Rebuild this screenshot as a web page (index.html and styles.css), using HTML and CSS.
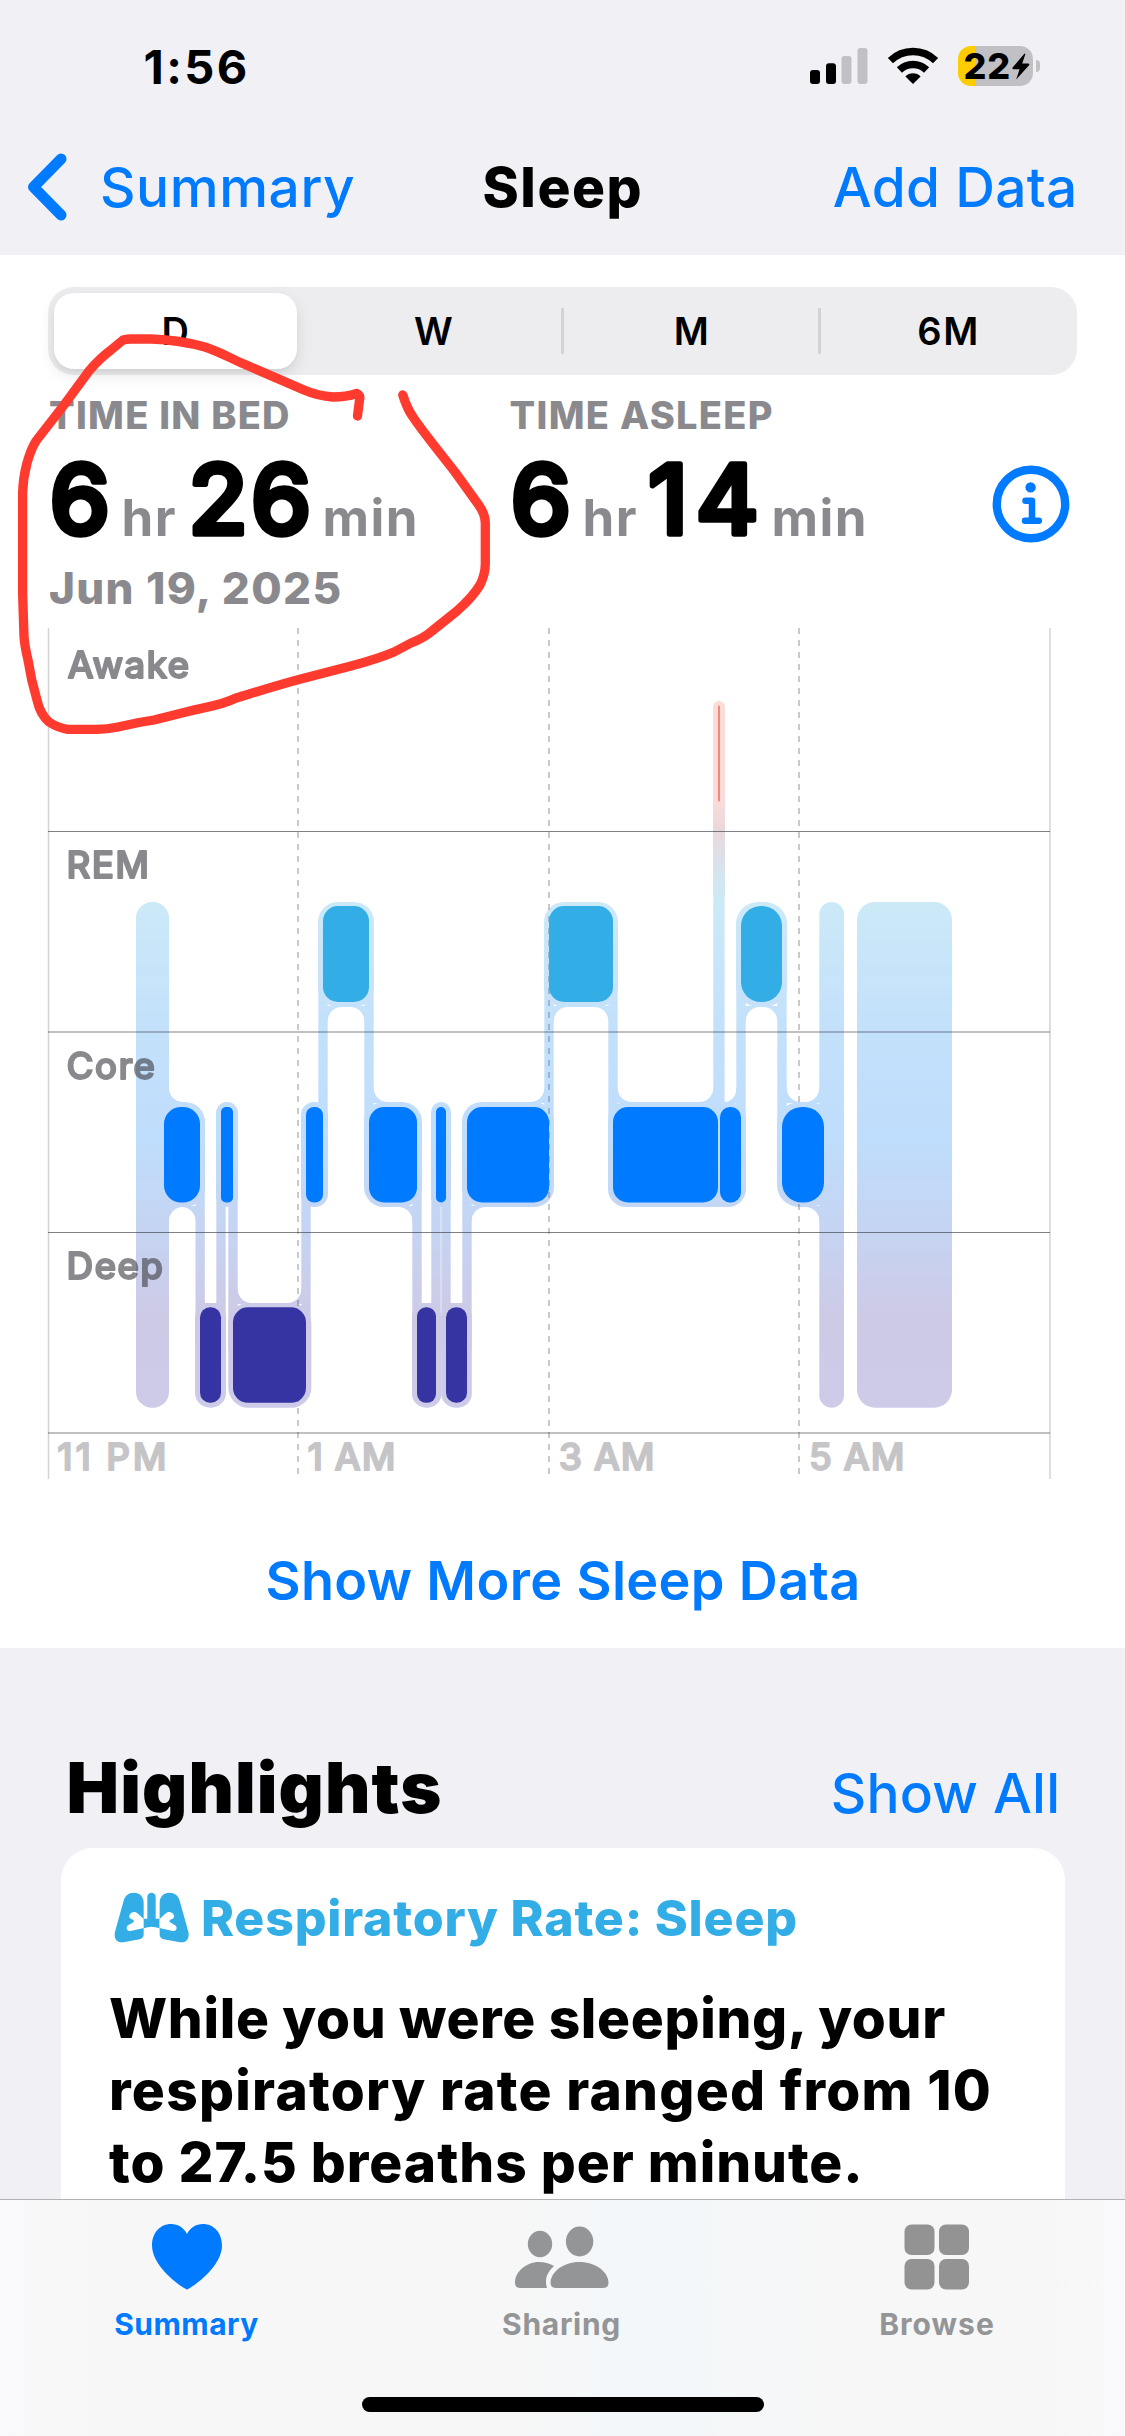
FILE: index.html
```html
<!DOCTYPE html>
<html lang="en">
<head>
<meta charset="utf-8">
<title>Sleep</title>
<link rel="stylesheet" href="styles.css">
</head>
<body>
<div class="screen">
  <header class="header">
    <div class="status">
      <span class="clock">1:56</span>
      <svg class="signal" width="58" height="36" viewBox="0 0 58 36">
        <rect x="0" y="22" width="10" height="14" rx="3"/>
        <rect x="16" y="15.3" width="10" height="20.7" rx="3"/>
        <rect class="dim" x="31.5" y="8" width="10" height="28" rx="3"/>
        <rect class="dim" x="47.5" y="0" width="10" height="36" rx="3"/>
      </svg>
      <svg class="wifi" width="52" height="38" viewBox="-26 -37 52 38">
        <path d="M-22.6 -23.4A32.5 32.5 0 0 1 22.6 -23.4M-13.6 -14A19.5 19.5 0 0 1 13.6 -14" fill="none" stroke="#000" stroke-width="7.4"/>
        <path d="M0 0L-7.6 -7.6A10.8 10.8 0 0 1 7.6 -7.6Z"/>
      </svg>
      <div class="battery">
        <span class="level">22</span>
        <svg width="18" height="27" viewBox="0 0 18 27"><path d="M12.6 .5L.6 14.4Q-.2 16.2 1.6 16.2H7.6L4.2 26.4L17 12.2Q18 10.4 16 10.4H10.2L13.4 1Z"/></svg>
      </div>
      <i class="nub"></i>
    </div>
    <nav class="nav">
      <div class="back">
        <svg width="42" height="70" viewBox="0 0 42 70"><path d="M35 7L7.5 35L35 63" fill="none" stroke="#007aff" stroke-width="11" stroke-linecap="round" stroke-linejoin="round"/></svg>
        <span class="back-label">Summary</span>
      </div>
      <h1 class="title">Sleep</h1>
      <span class="add">Add Data</span>
    </nav>
  </header>

  <main class="sleep">
    <div class="segmented">
      <span class="seg selected">D</span><span class="seg">W</span><span class="seg ruled">M</span><span class="seg ruled wide">6M</span>
    </div>
    <section class="metrics">
      <div class="metric">
        <div class="label bed">TIME IN BED</div>
        <svg class="value" width="440" height="118">
          <text class="digit" x="1.5" y="89">6</text><text class="unit" x="73.5" y="91">hr</text>
          <text class="digit pair" x="140.500" y="89">26</text><text class="unit" x="274.5" y="91">min</text>
        </svg>
        <div class="date">Jun 19, 2025</div>
      </div>
      <div class="metric">
        <div class="label asleep">TIME ASLEEP</div>
        <svg class="value" width="440" height="118">
          <text class="digit" x="1.5" y="89">6</text><text class="unit" x="73.5" y="91">hr</text>
          <text class="digit fourteen" x="139" y="89">14</text><text class="unit" x="262.500" y="91">min</text>
        </svg>
      </div>
      <svg class="info" width="78" height="78" viewBox="0 0 78 78">
        <circle cx="39" cy="39" r="34.2"/>
        <circle class="dot" cx="38.6" cy="22.4" r="5.2"/>
        <path d="M33.5 35.8H40V55.5M33 55.7H46.8"/>
      </svg>
    </section>

    <svg class="chart" width="1125" height="852" viewBox="0 628 1125 852">
      <defs>
        <linearGradient id="stages" gradientUnits="userSpaceOnUse" x1="0" y1="701" x2="0" y2="1408">
          <stop offset="0" stop-color="#fbdcd8"/>
          <stop offset=".14" stop-color="#f9dcd9"/>
          <stop offset=".18" stop-color="#ead8db"/>
          <stop offset=".25" stop-color="#d3e6f0"/>
          <stop offset=".29" stop-color="#cbe9f7"/>
          <stop offset=".45" stop-color="#c4e1fb"/>
          <stop offset=".62" stop-color="#bfddfc"/>
          <stop offset=".75" stop-color="#c5d4f2"/>
          <stop offset=".87" stop-color="#cdcae6"/>
          <stop offset="1" stop-color="#cdcbe8"/>
        </linearGradient>
        <path id="fillet" d="M-1 -1H14V0A14 14 0 0 0 0 14H-1Z"/>
        <clipPath id="track">
          <!-- in bed -->
          <rect x="136" y="902" width="33" height="505.7" rx="16"/>
          <rect x="819.3" y="902" width="24.7" height="505.7" rx="12.3"/>
          <rect x="857" y="902" width="95" height="505.7" rx="18"/>
          <!-- awake and REM -->
          <rect x="713" y="701" width="12" height="200" rx="6"/>
          <rect x="318" y="902" width="56" height="105" rx="20"/>
          <rect x="544" y="902" width="74" height="105" rx="20"/>
          <rect x="736" y="902" width="51" height="105" rx="22"/>
          <!-- core -->
          <rect x="150" y="1102" width="55" height="105" rx="20"/>
          <rect x="216" y="1102" width="22" height="105" rx="11"/>
          <rect x="301" y="1102" width="27" height="105" rx="13"/>
          <rect x="364" y="1102" width="58" height="105" rx="20"/>
          <rect x="431" y="1102" width="20" height="105" rx="10"/>
          <rect x="462" y="1102" width="92" height="105" rx="20"/>
          <rect x="608" y="1102" width="138" height="105" rx="18"/>
          <rect x="777" y="1102" width="55" height="105" rx="22"/>
          <!-- deep -->
          <rect x="195" y="1303" width="31" height="104.7" rx="15"/>
          <rect x="228.3" y="1303" width="83" height="104.7" rx="20"/>
          <rect x="412" y="1303" width="29.5" height="104.7" rx="14"/>
          <rect x="441.3" y="1303" width="30.5" height="104.7" rx="14"/>
          <!-- connectors -->
          <rect x="195.5" y="1150" width="9.3" height="200"/>
          <rect x="216.3" y="1150" width="9.4" height="200"/>
          <rect x="228.3" y="1150" width="9.4" height="200"/>
          <rect x="301.3" y="1150" width="9.4" height="200"/>
          <rect x="318.3" y="950" width="9.4" height="200"/>
          <rect x="364.3" y="950" width="9.4" height="200"/>
          <rect x="412.3" y="1150" width="9.4" height="200"/>
          <rect x="431.3" y="1150" width="9.4" height="200"/>
          <rect x="441.3" y="1150" width="9.4" height="200"/>
          <rect x="462.3" y="1150" width="9.4" height="200"/>
          <rect x="544.3" y="950" width="9.4" height="200"/>
          <rect x="608.3" y="950" width="9.4" height="200"/>
          <rect x="713.3" y="800" width="11.3" height="350"/>
          <rect x="736.3" y="950" width="9.4" height="200"/>
          <rect x="777.3" y="950" width="9.4" height="200"/>
          <rect x="204" y="1303" width="13" height="10"/>
          <rect x="421" y="1303" width="11" height="10"/>
          <rect x="450" y="1303" width="13" height="10"/>
          <!-- fillets -->
          <use href="#fillet" transform="translate(169 1102) scale(1 -1)"/>
          <use href="#fillet" transform="translate(169 1207)"/>
          <use href="#fillet" transform="translate(195.5 1207) scale(-1 1)"/>
          <use href="#fillet" transform="translate(237.7 1303) scale(1 -1)"/>
          <use href="#fillet" transform="translate(301.3 1303) scale(-1 -1)"/>
          <use href="#fillet" transform="translate(327.7 1007)"/>
          <use href="#fillet" transform="translate(364.3 1007) scale(-1 1)"/>
          <use href="#fillet" transform="translate(373.7 1102) scale(1 -1)"/>
          <use href="#fillet" transform="translate(412.3 1207) scale(-1 1)"/>
          <use href="#fillet" transform="translate(471.7 1207)"/>
          <use href="#fillet" transform="translate(544.3 1102) scale(-1 -1)"/>
          <use href="#fillet" transform="translate(553.7 1007)"/>
          <use href="#fillet" transform="translate(608.3 1007) scale(-1 1)"/>
          <use href="#fillet" transform="translate(617.7 1102) scale(1 -1)"/>
          <use href="#fillet" transform="translate(713.3 1102) scale(-1 -1)"/>
          <use href="#fillet" transform="translate(736.3 1102) scale(-.82 -.95)"/>
          <use href="#fillet" transform="translate(745.7 1007)"/>
          <use href="#fillet" transform="translate(777.3 1007) scale(-1 1)"/>
          <use href="#fillet" transform="translate(786.7 1102) scale(1 -1)"/>
          <use href="#fillet" transform="translate(819.3 1102) scale(-1 -1)"/>
          <use href="#fillet" transform="translate(819.3 1207) scale(-1 1)"/>
        </clipPath>
      </defs>

      <rect x="130" y="690" width="830" height="730" fill="url(#stages)" clip-path="url(#track)"/>

      <g class="grid-v">
        <path d="M48.5 628V1479M1050 628V1479"/>
        <path class="dashed" d="M298 628V1479M549 628V1479M799 628V1479"/>
      </g>
      <path class="grid-h thin" d="M48 831.5H1050M48 1232.5H1050"/>
      <path class="grid-h" d="M48 1032H1050M48 1433H1050"/>

      <rect x="718" y="705.7" width="2" height="95.6" fill="#f4877a"/>
      <g fill="#32ade6">
        <rect x="323" y="906" width="46" height="96" rx="15"/>
        <rect x="549" y="906" width="64" height="96" rx="15"/>
        <rect x="741" y="906" width="41" height="96" rx="20"/>
      </g>
      <g fill="#007aff">
        <rect x="164" y="1107" width="36" height="95.5" rx="17"/>
        <rect x="221" y="1107" width="12" height="95.5" rx="5"/>
        <rect x="306" y="1107" width="17" height="95.5" rx="8"/>
        <rect x="369" y="1107" width="48" height="95.5" rx="15"/>
        <rect x="436" y="1107" width="10" height="95.5" rx="5"/>
        <rect x="467" y="1107" width="82" height="95.5" rx="15"/>
        <rect x="613" y="1107" width="105" height="95.5" rx="15"/>
        <rect x="720" y="1107" width="21" height="95.5" rx="10"/>
        <rect x="782" y="1107" width="42" height="95.5" rx="20"/>
      </g>
      <g fill="#3634a3">
        <rect x="200" y="1307.3" width="21" height="95.5" rx="10"/>
        <rect x="233" y="1307.3" width="73" height="95.5" rx="15"/>
        <rect x="417" y="1307.3" width="19" height="95.5" rx="9"/>
        <rect x="446" y="1307.3" width="21" height="95.5" rx="10"/>
      </g>

      <g class="stage">
        <text x="67.5" y="677.5">Awake</text>
        <text x="66.5" y="877.5">REM</text>
        <text x="66.5" y="1078.5">Core</text>
        <text x="66.5" y="1278.5">Deep</text>
      </g>
      <g class="hour">
        <text class="eleven" x="57.3" y="1469.5">11 PM</text>
        <text x="307.5" y="1469.5">1 AM</text>
        <text x="558.8" y="1469.5">3 AM</text>
        <text x="809" y="1469.5">5 AM</text>
      </g>
    </svg>

    <div class="more">Show More Sleep Data</div>
  </main>

  <section class="highlights">
    <div class="section-head">
      <h2>Highlights</h2>
      <span class="show-all">Show All</span>
    </div>
    <article class="card">
      <div class="card-head">
        <svg width="78" height="54" viewBox="70 66 234 162">
          <g id="lobe">
            <path fill="#32ade6" d="M162 102C162 82 150 71 133 71C116 71 106 80 102 95L76 188C71 210 84 224 105 219L150 211C158 209 162 204 162 196Z"/>
            <path fill="#fff" d="M163 151L145 134C137 126 126 129 122 134C116 142 119 148 127 151Q133 153 133 157Q132 161 122 165C114 169 109 173 112 181C114 187 120 186 126 185L163 177Z"/>
          </g>
          <use href="#lobe" transform="translate(372 0) scale(-1 1)"/>
          <path fill="#32ade6" d="M173 84A12.5 12.5 0 0 1 198 84V149H209V178Q186 169 162 178V149H173Z"/>
        </svg>
        <span class="card-title">Respiratory Rate: Sleep</span>
      </div>
      <p class="card-text">
        <span class="line one">While you were sleeping, your</span>
        <span class="line two">respiratory rate ranged from 10</span>
        <span class="line three">to 27.5 breaths per minute.</span>
      </p>
    </article>
  </section>

  <footer class="tabbar">
    <div class="tab active">
      <svg width="72" height="68" viewBox="0 0 72 68"><path fill="#007aff" d="M36 66.5C34 66.5 1 45 1 22.5C1 9.5 9.5 1 20 1C27.500 1 33 5 36 11C39 5 44.5 1 52 1C62.5 1 71 9.5 71 22.5C71 45 38 66.5 36 66.5Z"/></svg>
      <span class="tab-label">Summary</span>
    </div>
    <div class="tab">
      <svg width="96" height="64" viewBox="0 0 96 64" fill="#939597">
        <ellipse cx="26" cy="19" rx="12.2" ry="13.2"/>
        <ellipse cx="65.6" cy="16.5" rx="13.7" ry="15"/>
        <path d="M6 63Q1 63 1 57.5C1 47 12 37 25 37Q33 37 40 41Q29 51 33 63Z"/>
        <path d="M42 63Q36.5 63 36.5 57.5C37 47 49 37 65.5 37C82 37 94 47 94.5 57.5Q94.5 63 89 63Z"/>
      </svg>
      <span class="tab-label sharing">Sharing</span>
    </div>
    <div class="tab">
      <svg width="66" height="66" viewBox="0 0 66 66" fill="#939393">
        <rect x=".5" y=".5" width="30" height="30.5" rx="7"/><rect x="35" y=".5" width="30" height="30.5" rx="7"/>
        <rect x=".5" y="35" width="30" height="30.5" rx="7"/><rect x="35" y="35" width="30" height="30.5" rx="7"/>
      </svg>
      <span class="tab-label browse">Browse</span>
    </div>
    <i class="home"></i>
  </footer>

  <svg class="markup" width="1125" height="760" viewBox="0 0 1125 760">
    <path d="M402.8 395C405 402 408 410 413 417C419 426 426 435 433 444L455 472L478 504Q485.3 514 485.3 523V563Q485.5 574 480 585C474 595 466 603 457 611L432 631Q424 638 411 643L394 652C380 658 366 662 351 666L297 680C275 686 256 692 236 698C220 706 205 707 190 711L154 720L139 722.5L118 727Q107 729.3 97 729.3H68Q58 728 49 722C42 716 39 709 37 700Q31 680 28 660Q24.4 645 24 636L22.6 593V493Q23 478 27 463C29 456 31 449 36 441L64 405L89 371Q99 359 111 350L123 340Q127 339 131 339H151Q180 340 205 347C220 352 232 359 244 364L304 390Q318 396 333 397Q346 397 356.6 393.5Q361 395 359.5 400L357.5 416"/>
  </svg>
</div>
</body>
</html>
```
FILE: styles.css
```css
* { box-sizing: border-box; }
body { margin: 0; font-family: Inter, "Liberation Sans", sans-serif; color: #000; }
svg { display: block; flex: none; }
h1, h2, p { margin: 0; }

.screen { position: relative; width: 1125px; height: 2436px; overflow: hidden; display: flex; flex-direction: column; background: #f1f0f5; }

.header { height: 255px; flex: none; }
.status { height: 135px; display: flex; align-items: center; padding-left: 143.5px; }
.clock { width: 666.5px; margin-top: -2px; font-size: 47px; font-weight: 700; letter-spacing: 2.4px; line-height: 60px; }
.signal .dim { fill: #c1c0c5; }
.signal { margin-top: -3px; }
.wifi { margin: -3px 0 0 18.5px; }
.battery { width: 75px; height: 40px; margin: -3px 0 0 19px; padding: 0 3px 0 6px; border-radius: 13px; display: flex; align-items: center; justify-content: space-between; background: linear-gradient(90deg, #ffcc00 17px, #c1c0c5 17px); }
.level { font-size: 36px; font-weight: 800; letter-spacing: .8px; line-height: 40px; }
.nub { width: 4.5px; height: 12px; margin: -3px 0 0 3px; border-radius: 0 5px 5px 0; background: #c1c0c5; }

.nav { height: 103px; display: grid; grid-template-columns: 1fr auto 1fr; align-items: center; padding: 0 47.4px 0 26px; }
.back { display: flex; align-items: center; }
.back-label { margin-left: 32px; color: #007aff; font-size: 55px; font-weight: 500; letter-spacing: .57px; }
.title { margin-left: 22px; font-size: 55px; font-weight: 800; letter-spacing: 1.5px; }
.add { justify-self: end; color: #007aff; font-size: 55px; font-weight: 500; letter-spacing: .3px; }

.sleep { height: 1393px; flex: none; background: #fff; padding-top: 32px; }
.segmented { width: 1029px; height: 88px; margin-left: 48px; display: grid; grid-template-columns: repeat(4, 1fr); align-items: center; border-radius: 26px; background: #ededef; }
.seg { font-size: 38px; font-weight: 600; line-height: 46px; text-align: center; padding-right: 1px; }
.selected { height: 76px; margin: 0 8px 0 6px; line-height: 76px; border-radius: 20px; background: #fff; box-shadow: 0 6px 16px rgba(0, 0, 0, .1), 0 3px 3px rgba(0, 0, 0, .03); }
.ruled { margin-left: -1.5px; border-left: 3px solid #d3d3d6; }
.wide { letter-spacing: 1.6px; }

.metrics { display: flex; height: 253px; padding: 10px 0 0 48px; }
.metric { width: 460.5px; }
.metric + .metric { width: 483px; }
.label { font-size: 38px; font-weight: 800; line-height: 60px; color: #8a8a8e; padding-left: 1px; }
.bed { letter-spacing: 1.25px; }
.asleep { letter-spacing: 1.3px; }
.value { overflow: visible; }
.digit { font-size: 96px; font-weight: 500; stroke: #000; stroke-width: 5.5px; stroke-linejoin: round; }
.pair { letter-spacing: 3px; }
.fourteen { letter-spacing: 8px; }
.unit { font-size: 51px; font-weight: 700; letter-spacing: 1.4px; fill: #8a8a8e; }
.date { font-size: 44px; font-weight: 800; line-height: 50px; letter-spacing: 1.36px; color: #8a8a8e; padding-left: 1px; }
.info { margin-top: 80px; fill: none; stroke: #007aff; stroke-width: 8.4px; }
.info .dot { fill: #007aff; stroke: none; }
.info path { stroke-width: 6.5px; stroke-linecap: round; stroke-linejoin: round; }

.grid-v path { fill: none; stroke: #d3d3d5; stroke-width: 1.5px; }
.grid-v .dashed { stroke: rgba(60, 60, 67, .27); stroke-width: 2px; stroke-dasharray: 6 6; }
.grid-h { fill: none; stroke: rgba(60, 60, 67, .32); stroke-width: 2px; }
.grid-h.thin { stroke: rgba(60, 60, 67, .65); stroke-width: 1px; }
.stage text, .hour text { font-size: 37px; font-weight: 500; stroke-width: 1.8px; stroke-linejoin: round; letter-spacing: 1.2px; }
.stage text { fill: #3c3c43; stroke: #3c3c43; opacity: .6; }
.hour text { fill: #c5c5c7; stroke: #c5c5c7; letter-spacing: .9px; }
.hour .eleven { letter-spacing: 2.8px; }

.more { margin-top: 66px; padding-left: 1px; line-height: 70px; text-align: center; font-size: 54px; font-weight: 600; letter-spacing: .33px; color: #007aff; }

.highlights { height: 551px; flex: none; overflow: hidden; padding-top: 99.5px; }
.section-head { display: flex; justify-content: space-between; align-items: baseline; padding: 0 64.8px 0 66.6px; }
h2 { font-size: 70px; line-height: 80px; font-weight: 900; letter-spacing: 1.1px; }
.show-all { font-size: 55px; font-weight: 500; line-height: 70px; letter-spacing: .2px; color: #007aff; }
.card { width: 1004px; height: 500px; margin: 20.5px 0 0 61px; padding: 40px 0 0 48px; border-radius: 32px; background: #fff; }
.card-head { display: flex; align-items: center; height: 60px; padding-left: 4px; }
.card-title { margin-left: 10px; font-size: 50px; font-weight: 800; letter-spacing: .8px; color: #32ade6; white-space: nowrap; }
.card-text { margin-top: 34px; font-size: 55px; font-weight: 800; line-height: 72px; white-space: nowrap; }
.line { display: block; }
.one { letter-spacing: .65px; }
.two { letter-spacing: 1.27px; }
.three { letter-spacing: .95px; }

.tabbar { position: relative; height: 237px; flex: none; display: grid; grid-template-columns: repeat(3, 1fr); border-top: 1px solid #b2b2b4; background: linear-gradient(90deg, #f9f9fb, #f7f7f7 10%, #f7f7f7 45%, #f3f7fa 57%, #f7f7f7 75%, #f7f7f7 92%, #f9f9fb); }
.tab { display: flex; flex-direction: column; align-items: center; padding: 22.5px 2px 0 0; color: #939597; }
.tab svg { height: 68px; }
.tab-label { margin-top: 13.5px; font-size: 30px; line-height: 40px; font-weight: 700; letter-spacing: .5px; }
.active { color: #007aff; }
.sharing { letter-spacing: .7px; }
.browse { margin-left: 1px; letter-spacing: 1px; }
.home { position: absolute; left: 362px; top: 197px; width: 402px; height: 15px; border-radius: 8px; background: #000; }

.markup { position: absolute; left: 0; top: 0; }
.markup path { fill: none; stroke: #ff3b30; stroke-width: 9.3px; stroke-linecap: round; stroke-linejoin: round; }
```
